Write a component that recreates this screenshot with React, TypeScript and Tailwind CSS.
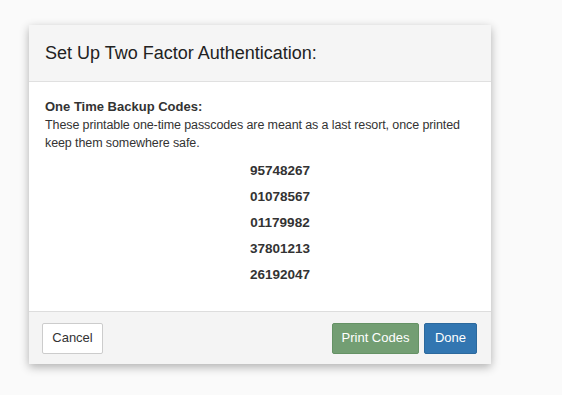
const codes = ['95748267', '01078567', '01179982', '37801213', '26192047'];

export default function App() {
  return (
    <div
      className="min-h-[395px] w-[562px] bg-[#fafafa] pl-[29px] pt-[25px] text-[#333]"
      style={{ fontFamily: '"Liberation Sans", Arial, sans-serif' }}
    >
      <div className="w-[462px] bg-white shadow-[0_3px_9px_rgba(0,0,0,0.3)]">
        <div className="flex h-[57px] items-center border-b border-[#e0e0e0] bg-[#f5f5f5] px-4">
          <h2 className="text-[18px] text-[#222]">Set Up Two Factor Authentication:</h2>
        </div>
        <div className="px-4 pb-[27px] pt-[16px] text-[12.5px] leading-[18px] tracking-[-0.1px]">
          <div className="text-[13px] font-bold tracking-normal">One Time Backup Codes:</div>
          <p>
            These printable one-time passcodes are meant as a last resort, once printed keep them
            somewhere safe.
          </p>
          <div className="mt-[10px] flex flex-col items-center gap-[8px] pl-[40px] text-[13.5px] font-bold tracking-normal">
            {codes.map((c) => (
              <div key={c}>{c}</div>
            ))}
          </div>
        </div>
        <div className="flex h-[53px] items-center justify-between border-t border-[#ddd] bg-[#f4f4f4] pl-[13px] pr-[14px] text-[13px]">
          <button className="h-[31px] w-[61px] rounded-[2px] border border-[#ccc] bg-white text-[#333]">
            Cancel
          </button>
          <div className="flex gap-[5px]">
            <button className="h-[31px] w-[87px] rounded-[2px] border border-[#659265] bg-[#739e73] text-white">
              Print Codes
            </button>
            <button className="h-[31px] w-[53px] rounded-[2px] border border-[#2c699d] bg-[#3276b1] text-white">
              Done
            </button>
          </div>
        </div>
      </div>
    </div>
  );
}
